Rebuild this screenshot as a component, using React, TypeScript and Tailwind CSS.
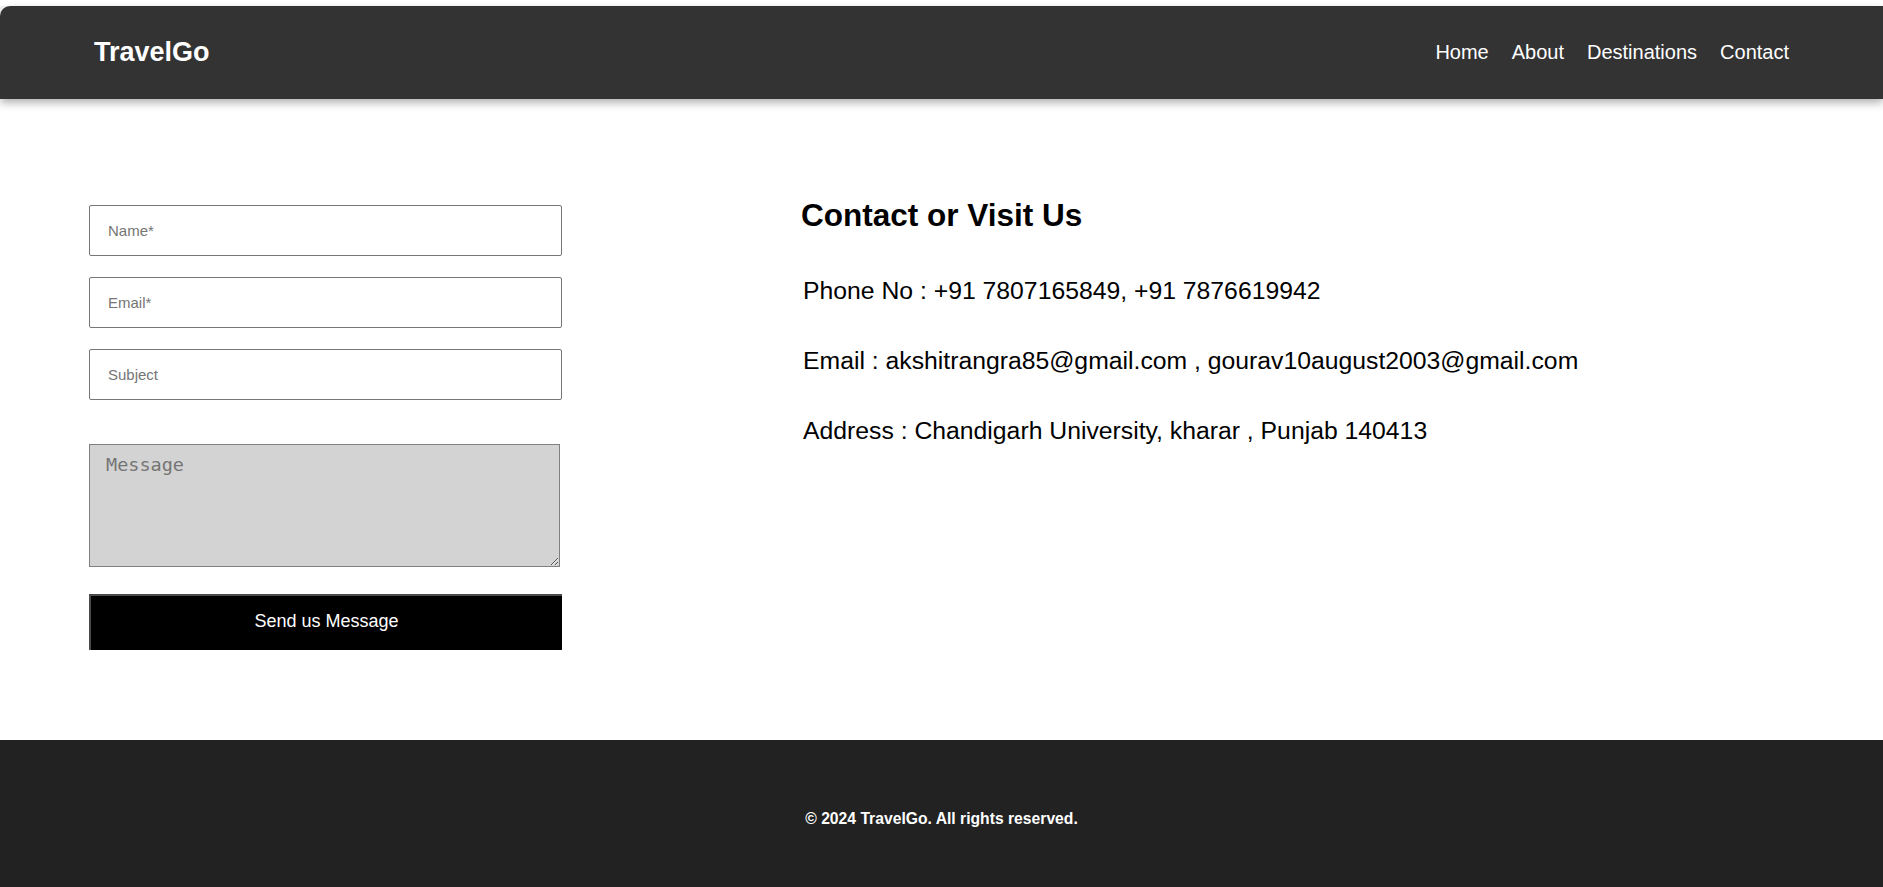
import React from "react";

const navLinks = ["Home", "About", "Destinations", "Contact"];

const contactLines = [
  "Phone No : +91 7807165849, +91 7876619942",
  "Email : akshitrangra85@gmail.com , gourav10august2003@gmail.com",
  "Address : Chandigarh University, kharar , Punjab 140413",
];

const Header: React.FC = () => {
  return (
    <header className="relative z-10 mt-[6px] flex h-[93px] items-center justify-between rounded-tl-[10px] bg-[#333333] px-[94px] shadow-[0_4px_8px_rgba(0,0,0,0.3)]">
      <div className="text-[27px] font-bold text-white">TravelGo</div>
      <nav className="mb-[2px] flex gap-[23px]">
        {navLinks.map((link) => (
          <a key={link} href="#" className="text-[20px] text-white">
            {link}
          </a>
        ))}
      </nav>
    </header>
  );
};

const ContactForm: React.FC = () => {
  return (
    <form className="flex w-[473px] flex-col pb-[90px] pt-[106px]">
      <div className="flex flex-col gap-[21px]">
        <input
          type="text"
          placeholder="Name*"
          className="h-[51px] w-full rounded-[2px] border border-[#767676] px-[18px] text-[15px] placeholder:text-[#757575]"
        />
        <input
          type="email"
          placeholder="Email*"
          className="h-[51px] w-full rounded-[2px] border border-[#767676] px-[18px] text-[15px] placeholder:text-[#757575]"
        />
        <input
          type="text"
          placeholder="Subject"
          className="h-[51px] w-full rounded-[2px] border border-[#767676] px-[18px] text-[15px] placeholder:text-[#757575]"
        />
      </div>
      <textarea
        placeholder="Message"
        className="mt-[44px] h-[123px] w-[471px] border border-[#808080] bg-[#d3d3d3] pl-[16px] pt-[6px] font-['DejaVu_Sans_Mono',monospace] text-[18.5px] placeholder:text-[#757575]"
      />
      <button
        type="button"
        className="mt-[27px] h-[56px] w-full border-l-2 border-t-2 border-[#4a4a4a] bg-black pb-[3px] text-[18px] text-white"
      >
        Send us Message
      </button>
    </form>
  );
};

const ContactInfo: React.FC = () => {
  return (
    <div className="ml-[239px] pt-[98px]">
      <h2 className="text-[31.5px] font-bold leading-[36px] text-black">Contact or Visit Us</h2>
      <div className="mt-[44px] flex flex-col gap-[42px] pl-[2px]">
        {contactLines.map((line) => (
          <p key={line} className="text-[24.75px] leading-[28px] text-black">
            {line}
          </p>
        ))}
      </div>
    </div>
  );
};

const App: React.FC = () => {
  return (
    <div className="min-h-screen bg-[#f4f4f4] font-['Liberation_Sans',Arial,sans-serif]">
      <Header />
      <main className="flex bg-white px-[89px]">
        <ContactForm />
        <ContactInfo />
      </main>
      <footer className="bg-[#222222] pb-[68px] pt-[70px] text-center">
        <p className="text-[15.7px] font-bold leading-[18px] text-white">© 2024 TravelGo. All rights reserved.</p>
      </footer>
    </div>
  );
};

export default App;
